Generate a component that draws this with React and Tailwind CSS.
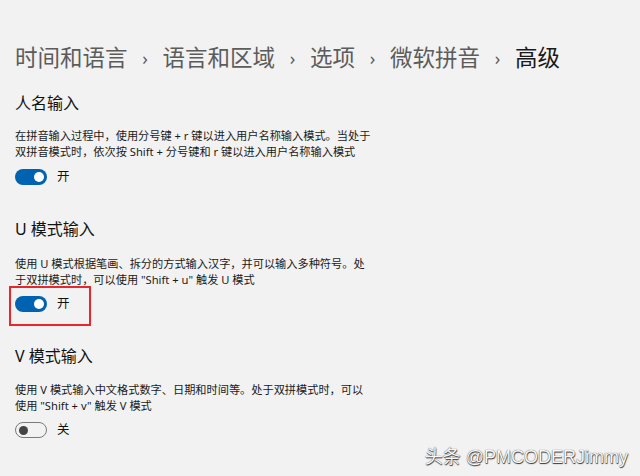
import React from "react";

const FONT = { fontFamily: '"Noto Sans", "Noto Sans CJK SC", sans-serif' };

function Toggle({ on }) {
  if (on) {
    return (
      <div className="flex h-[16px] w-[32px] items-center justify-end rounded-full bg-[#0063b1] pr-[3px]">
        <div className="h-[10px] w-[10px] rounded-full bg-white" />
      </div>
    );
  }
  return (
    <div className="flex h-[16px] w-[32px] items-center justify-start rounded-full border-[1.5px] border-[#7a7a7a] pl-[2.5px]">
      <div className="h-[9px] w-[9px] rounded-full bg-[#444]" />
    </div>
  );
}

function ToggleRow({ on, label, highlight, mt }) {
  return (
    <div className={`relative flex h-[20px] items-center gap-[10px] ${mt}`}>
      <Toggle on={on} />
      <span className="text-[12.5px] leading-none text-[#111]">{label}</span>
      {highlight && (
        <div className="absolute left-[-6px] top-[-8px] h-[40px] w-[82px] border-2 border-[#e8262b]" />
      )}
    </div>
  );
}

function Chevron() {
  return (
    <span className="inline-block w-[35px] text-center text-[18px] text-[#5c5c5c]">›</span>
  );
}

export default function App() {
  return (
    <div
      className="relative h-[476px] w-[640px] overflow-hidden bg-[#f2f2f2] pl-[15px] pt-[42px]"
      style={FONT}
    >
      <div className="flex h-[32px] items-center whitespace-nowrap text-[22.5px] leading-[32px] text-[#5c5c5c]">
        <span>时间和语言</span>
        <Chevron />
        <span>语言和区域</span>
        <Chevron />
        <span>选项</span>
        <Chevron />
        <span>微软拼音</span>
        <Chevron />
        <span className="text-[#1a1a1a]">高级</span>
      </div>

      {/* Section 1 */}
      <div className="mt-[18px] text-[16px] leading-[22px] text-[#111]">人名输入</div>
      <div className="mt-[14px] text-[11.2px] leading-[16px] text-[#1a1a1a]">
        在拼音输入过程中，使用分号键 + r 键以进入用户名称输入模式。当处于
        <br />
        双拼音模式时，依次按 Shift + 分号键和 r 键以进入用户名称输入模式
      </div>
      <ToggleRow on label="开" mt="mt-[7px]" />

      {/* Section 2 */}
      <div className="mt-[31px] text-[16px] leading-[22px] text-[#111]">U 模式输入</div>
      <div className="mt-[16px] text-[11.2px] leading-[16px] text-[#1a1a1a]">
        使用 U 模式根据笔画、拆分的方式输入汉字，并可以输入多种符号。处
        <br />
        于双拼模式时，可以使用 "Shift + u" 触发 U 模式
      </div>
      <ToggleRow on label="开" highlight mt="mt-[6px]" />

      {/* Section 3 */}
      <div className="mt-[31px] text-[16px] leading-[22px] text-[#111]">V 模式输入</div>
      <div className="mt-[15px] text-[11.2px] leading-[16px] text-[#1a1a1a]">
        使用 V 模式输入中文格式数字、日期和时间等。处于双拼模式时，可以
        <br />
        使用 "Shift + v" 触发 V 模式
      </div>
      <ToggleRow on={false} label="关" mt="mt-[6px]" />

      <div
        className="absolute bottom-[8px] right-[12px] whitespace-nowrap text-[18px] leading-[22px] text-[#f7f7f7]"
        style={{
          fontFamily: '"Liberation Sans", "Noto Sans CJK SC", sans-serif',
          textShadow: "0 0 1px #333, 0.5px 0.5px 1px #333",
        }}
      >
        头条 @PMCODERJimmy
      </div>
    </div>
  );
}
